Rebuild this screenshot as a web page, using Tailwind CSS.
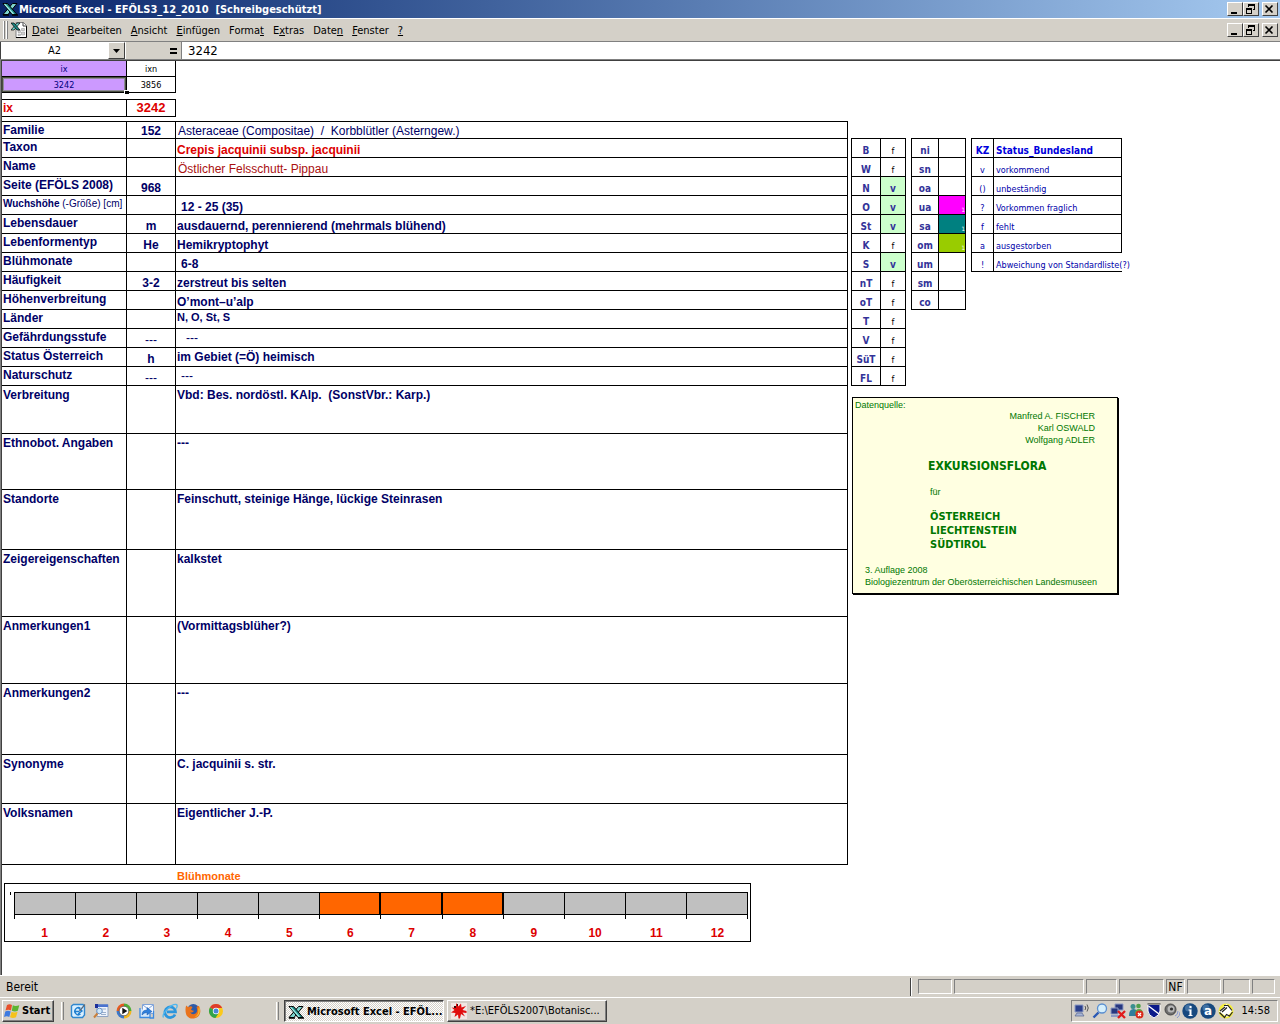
<!DOCTYPE html>
<html lang="de">

<head>
  <meta charset="UTF-8">
  <meta name="viewport" content="width=device-width, initial-scale=1">
  <title>Microsoft Excel - EFÖLS3_12_2010 [Schreibgeschützt]</title>
  <script src="https://cdn.jsdelivr.net/npm/@tailwindcss/browser@4"></script>
</head>

<body class="h-screen flex flex-col overflow-hidden bg-[#d4d0c8] text-black font-['DejaVu_Sans_Condensed','Liberation_Sans',sans-serif] text-[11px] leading-[14px]">

  <!-- Icons shared by several bars -->
  <svg class="hidden">
    <symbol id="excel" viewBox="0 0 16 16">
      <path d="M10.500 2.500h4.500L6 13.500H1z" fill="#7fd6d0" stroke="#000" stroke-width="1" />
      <path d="M1 2.500h4.500l9.500 11H10z" fill="#1d8a86" stroke="#000" stroke-width="1" />
      <path d="M2.500 3l9 10" stroke="#a5ece6" stroke-width="1.200" />
      <path d="M1 14h6M10 14h6" stroke="#000" stroke-width="1.500" />
    </symbol>
    <symbol id="win-min" viewBox="0 0 12 10"><path d="M3 8h6v2H3z" /></symbol>
    <symbol id="win-restore" viewBox="0 0 12 10">
      <path d="M4 0h7v6H9V5h1V2H5v1H4zM2 4h6v6H2zm1 2v3h4V6z" fill-rule="evenodd" />
    </symbol>
    <symbol id="win-close" viewBox="0 0 12 10">
      <path d="M2.500 1.500l7 7M9.500 1.500l-7 7" stroke="#000" stroke-width="1.600" />
    </symbol>
  </svg>

  <!-- Title bar -->
  <header class="flex items-center h-[18px] pl-[2px] pr-[2px] bg-gradient-to-r from-[#0a246a] to-[#a6caf0]">
    <svg class="w-4 h-4"><use href="#excel" /></svg>
    <h1 class="ml-px pt-px text-white font-bold whitespace-pre">Microsoft Excel - EFÖLS3_12_2010  [Schreibgeschützt]</h1>
    <div class="ml-auto flex [&_button]:w-4 [&_button]:h-[14px] [&_button]:bg-[#d4d0c8] [&_button]:border [&_button]:border-t-white [&_button]:border-l-white [&_button]:border-r-[#404040] [&_button]:border-b-[#404040]">
      <button aria-label="Minimieren"><svg class="w-3 h-[10px]"><use href="#win-min" /></svg></button>
      <button aria-label="Wiederherstellen"><svg class="w-3 h-[10px]"><use href="#win-restore" /></svg></button>
      <button aria-label="Schließen" class="ml-[3px]"><svg class="w-3 h-[10px]"><use href="#win-close" /></svg></button>
    </div>
  </header>

  <!-- Menu bar -->
  <nav class="flex items-center h-6 border-t border-b border-t-white border-b-[#808080] pl-[3px] pr-[2px]">
    <span class="w-[2px] h-[18px] border-l border-l-white border-r border-r-[#808080]"></span>
    <span class="ml-px w-[2px] h-[18px] border-l border-l-white border-r border-r-[#808080]"></span>
    <svg class="ml-[3px] w-4 h-4" viewBox="0 0 16 16">
      <path d="M5 .5h7.500l3 3v12H5z" fill="#fff" stroke="#808080" />
      <path d="M15.500 4v11.500H5" fill="none" stroke="#000" />
      <path d="M12 .5v3.500h3.500" fill="none" stroke="#404040" />
      <path d="M7 8.500h2.500v2H7zM10.500 6.500h3v2h-3zM7 12h2.500v1.500H7zM10.500 10h3v3h-3z" fill="#d0d0d0" stroke="#909090" stroke-width=".5" />
      <path d="M9 1H6L0 8h3z" fill="#6fd8d0" stroke="#000" stroke-width=".7" />
      <path d="M0 1h3l6 7H6z" fill="#1d8a86" stroke="#000" stroke-width=".7" />
    </svg>
    <div class="ml-[5px] pt-[2px] flex gap-[9px]">
      <button><u>D</u>atei</button>
      <button><u>B</u>earbeiten</button>
      <button><u>A</u>nsicht</button>
      <button><u>E</u>infügen</button>
      <button>Forma<u>t</u></button>
      <button>E<u>x</u>tras</button>
      <button>Date<u>n</u></button>
      <button><u>F</u>enster</button>
      <button><u>?</u></button>
    </div>
    <div class="ml-auto flex [&_button]:w-4 [&_button]:h-[14px] [&_button]:bg-[#d4d0c8] [&_button]:border [&_button]:border-t-white [&_button]:border-l-white [&_button]:border-r-[#404040] [&_button]:border-b-[#404040]">
      <button aria-label="Mappe minimieren"><svg class="w-3 h-[10px]"><use href="#win-min" /></svg></button>
      <button aria-label="Mappe wiederherstellen"><svg class="w-3 h-[10px]"><use href="#win-restore" /></svg></button>
      <button aria-label="Mappe schließen" class="ml-[3px]"><svg class="w-3 h-[10px]"><use href="#win-close" /></svg></button>
    </div>
  </nav>

  <!-- Formula bar -->
  <div class="flex h-[17px] bg-white">
    <input aria-label="Namenfeld" value="A2" class="w-[108px] border-l border-[#404040] pt-px text-center">
    <button aria-label="Namen auswählen" class="flex items-center justify-center w-[17px] bg-[#d4d0c8] border border-t-white border-l-white border-r-[#404040] border-b-[#404040]">
      <svg class="w-[7px] h-1" viewBox="0 0 7 4"><path d="M0 0h7L3.500 4z" /></svg>
    </button>
    <div class="ml-px w-14 pr-1 flex justify-end items-center bg-[#d4d0c8] border-r border-[#808080]">
      <button aria-label="Formel bearbeiten"><svg class="w-[7px] h-[6px]" viewBox="0 0 7 6"><path d="M0 0h7v2H0zM0 4h7v2H0z" /></svg></button>
    </div>
    <input aria-label="Bearbeitungsleiste" value="3242" class="flex-1 pl-[6px] text-[13px]">
  </div>

  <!-- Sheet -->
  <main class="flex flex-1 min-h-0 bg-white border-t border-l border-[#808080] font-['Liberation_Sans',sans-serif]">
    <div class="flex flex-1 border-t border-l border-[#404040] text-[12px] leading-[14px] text-[#000066]">

      <div class="w-[846px] shrink-0">
        <table class="border-separate border-spacing-0 table-fixed w-[174px] text-center text-[9px] leading-[12px] text-black font-['DejaVu_Sans_Condensed','Liberation_Sans',sans-serif] [&_td]:h-4 [&_td]:border-r [&_td]:border-b [&_td]:border-black">
          <colgroup><col class="w-[125px]"><col class="w-[49px]"></colgroup>
          <tr>
            <td class="bg-[#cc99ff] text-[#000080]">ix</td>
            <td>ixn</td>
          </tr>
          <tr>
            <td class="relative bg-[#cc99ff] text-[#000080] shadow-[inset_0_0_0_1px_#4a5040,inset_0_0_0_2px_#8f8a99]">3242
              <span class="absolute -right-[3px] -bottom-[2px] w-[5px] h-1 bg-black border-t border-l border-white"></span>
            </td>
            <td>3856</td>
          </tr>
        </table>

        <table class="mt-[6px] border-separate border-spacing-0 table-fixed w-[174px] border-t border-black text-[#dd0000] font-bold [&_td]:h-[17px] [&_td]:border-r [&_td]:border-b [&_td]:border-black">
          <colgroup><col class="w-[125px]"><col class="w-[49px]"></colgroup>
          <tr>
            <td class="pl-px">ix</td>
            <td class="text-center text-[13px]">3242</td>
          </tr>
        </table>

        <!-- Data sheet of the selected taxon -->
        <table class="mt-1 border-separate border-spacing-0 table-fixed w-full border-t border-black font-bold [&_th]:border-r [&_th]:border-b [&_td]:border-r [&_td]:border-b [&_th]:border-black [&_td]:border-black [&_th]:pl-px [&_th]:text-left [&_th]:align-top [&_th]:whitespace-nowrap">
          <colgroup><col class="w-[125px]"><col class="w-[49px]"><col></colgroup>
          <tbody class="align-bottom [&_th]:pt-px">
            <tr class="h-[17px]"><th>Familie</th><td class="text-center">152</td><td class="pl-[2px] font-normal whitespace-pre">Asteraceae (Compositae)  /  Korbblütler (Asterngew.)</td></tr>
            <tr class="h-[19px]"><th>Taxon</th><td></td><td class="pl-px text-[#dd0000]">Crepis jacquinii subsp. jacquinii</td></tr>
            <tr class="h-[19px]"><th>Name</th><td></td><td class="pl-[2px] font-normal text-[#aa1111]">Östlicher Felsschutt- Pippau</td></tr>
            <tr class="h-[19px]"><th>Seite (EFÖLS 2008)</th><td class="text-center">968</td><td></td></tr>
            <tr class="h-[19px]"><th class="text-[10px]">Wuchshöhe <span class="font-normal">(-Größe) [cm]</span></th><td></td><td class="pl-[5px]">12 - 25 (35)</td></tr>
            <tr class="h-[19px]"><th>Lebensdauer</th><td class="text-center">m</td><td class="pl-px">ausdauernd, perennierend (mehrmals blühend)</td></tr>
            <tr class="h-[19px]"><th>Lebenformentyp</th><td class="text-center">He</td><td class="pl-px">Hemikryptophyt</td></tr>
            <tr class="h-[19px]"><th>Blühmonate</th><td></td><td class="pl-[5px]">6-8</td></tr>
            <tr class="h-[19px]"><th>Häufigkeit</th><td class="text-center">3-2</td><td class="pl-px">zerstreut bis selten</td></tr>
            <tr class="h-[19px]"><th>Höhenverbreitung</th><td></td><td class="pl-px">O’mont–u’alp</td></tr>
            <tr class="h-[19px]"><th>Länder</th><td></td><td class="pl-px align-top text-[11px]">N, O, St, S</td></tr>
            <tr class="h-[19px]"><th>Gefährdungsstufe</th><td class="text-center font-normal">---</td><td class="pl-[10px] align-middle font-normal">---</td></tr>
            <tr class="h-[19px]"><th>Status Österreich</th><td class="text-center">h</td><td class="pl-px align-middle">im Gebiet (=Ö) heimisch</td></tr>
            <tr class="h-[19px]"><th>Naturschutz</th><td class="text-center font-normal">---</td><td class="pl-[5px] align-middle font-normal">---</td></tr>
          </tbody>
          <tbody class="align-top [&_th]:pt-[2px] [&_td]:pt-[2px]">
            <tr class="h-12"><th>Verbreitung</th><td></td><td class="pl-px whitespace-pre">Vbd: Bes. nordöstl. KAlp.  (SonstVbr.: Karp.)</td></tr>
            <tr class="h-14"><th>Ethnobot. Angaben</th><td></td><td class="pl-px">---</td></tr>
            <tr class="h-[60px]"><th>Standorte</th><td></td><td class="pl-px">Feinschutt, steinige Hänge, lückige Steinrasen</td></tr>
            <tr class="h-[67px]"><th>Zeigereigenschaften</th><td></td><td class="pl-px">kalkstet</td></tr>
            <tr class="h-[67px]"><th>Anmerkungen1</th><td></td><td class="pl-px">(Vormittagsblüher?)</td></tr>
            <tr class="h-[71px]"><th>Anmerkungen2</th><td></td><td class="pl-px">---</td></tr>
            <tr class="h-[49px]"><th>Synonyme</th><td></td><td class="pl-px">C. jacquinii s. str.</td></tr>
            <tr class="h-[61px]"><th>Volksnamen</th><td></td><td class="pl-px">Eigentlicher J.-P.</td></tr>
          </tbody>
        </table>

        <!-- Flowering months -->
        <h2 class="mt-1 pl-[175px] text-[11px] leading-[14px] font-bold text-[#ff6600]">Blühmonate</h2>
        <div class="ml-[2px] flex w-[747px] h-[59px] border border-black pt-2 text-[#dd0000] font-bold">
          <span class="ml-[5px] w-px h-[3px] bg-black"></span>
          <div class="ml-[3px] w-[734px]">
            <div class="grid grid-cols-12 h-[23px] border-y border-r border-black bg-[#c0c0c0] [&_i]:border-l [&_i]:border-black">
              <i></i><i></i><i></i><i></i><i></i>
              <i class="bg-[#ff6600]"></i><i class="bg-[#ff6600] shadow-[-1px_0_0_#000]"></i><i class="bg-[#ff6600] shadow-[-1px_0_0_#000]"></i>
              <i class="shadow-[-1px_0_0_#000]"></i><i></i><i></i><i></i>
            </div>
            <div class="grid grid-cols-12 h-1 border-r border-black [&_i]:border-l [&_i]:border-black">
              <i></i><i></i><i></i><i></i><i></i><i></i><i></i><i></i><i></i><i></i><i></i><i></i>
            </div>
            <div class="grid grid-cols-12 mt-[7px] text-center">
              <span>1</span><span>2</span><span>3</span><span>4</span><span>5</span><span>6</span><span>7</span><span>8</span><span>9</span><span>10</span><span>11</span><span>12</span>
            </div>
          </div>
        </div>
      </div>

      <!-- Provinces, altitude levels, legend -->
      <div class="ml-[3px] pt-[77px]">
        <div class="flex items-start gap-[5px] text-[10px] leading-[12px] text-[#333399] font-['DejaVu_Sans_Condensed','Liberation_Sans',sans-serif]">
          <table class="border-separate border-spacing-0 table-fixed w-[55px] border-t border-l border-black text-center [&_td]:h-[19px] [&_th]:border-r [&_th]:border-b [&_td]:border-r [&_td]:border-b [&_th]:border-black [&_td]:border-black [&_td]:align-bottom [&_th]:align-bottom">
            <colgroup><col class="w-[29px]"><col class="w-[25px]"></colgroup>
            <tr><th>B</th><td class="text-[9px] text-black">f</td></tr>
            <tr><th>W</th><td class="text-[9px] text-black">f</td></tr>
            <tr><th>N</th><td class="bg-[#ccffcc] font-bold">v</td></tr>
            <tr><th>O</th><td class="bg-[#ccffcc] font-bold">v</td></tr>
            <tr><th>St</th><td class="bg-[#ccffcc] font-bold">v</td></tr>
            <tr><th>K</th><td class="text-[9px] text-black">f</td></tr>
            <tr><th>S</th><td class="bg-[#ccffcc] font-bold">v</td></tr>
            <tr><th>nT</th><td class="text-[9px] text-black">f</td></tr>
            <tr><th>oT</th><td class="text-[9px] text-black">f</td></tr>
            <tr><th>T</th><td class="text-[9px] text-black">f</td></tr>
            <tr><th>V</th><td class="text-[9px] text-black">f</td></tr>
            <tr><th>SüT</th><td class="text-[9px] text-black">f</td></tr>
            <tr><th>FL</th><td class="text-[9px] text-black">f</td></tr>
          </table>

          <table class="border-separate border-spacing-0 table-fixed w-[55px] border-t border-l border-black text-center [&_td]:h-[19px] [&_th]:border-r [&_th]:border-b [&_td]:border-r [&_td]:border-b [&_th]:border-black [&_td]:border-black [&_td]:align-bottom [&_th]:align-bottom">
            <colgroup><col class="w-[27px]"><col class="w-[27px]"></colgroup>
            <tr><th>ni</th><td></td></tr>
            <tr><th>sn</th><td></td></tr>
            <tr><th>oa</th><td></td></tr>
            <tr><th>ua</th><td class="bg-[#ff00ff] text-right text-[6px] leading-[9px] text-white">1</td></tr>
            <tr><th>sa</th><td class="bg-[#008080] text-right text-[6px] leading-[9px] text-white">1</td></tr>
            <tr><th>om</th><td class="bg-[#99cc00] text-right text-[6px] leading-[9px] text-white">1</td></tr>
            <tr><th>um</th><td></td></tr>
            <tr><th>sm</th><td></td></tr>
            <tr><th>co</th><td></td></tr>
          </table>

          <table class="border-separate border-spacing-0 table-fixed w-[151px] border-t border-l border-black text-[#0000aa] whitespace-nowrap [&_td]:h-[19px] [&_td]:text-[9px] [&_th]:h-[19px] [&_th]:border-r [&_th]:border-b [&_td]:border-b [&_th]:border-black [&_td]:border-black [&_td]:align-bottom [&_th]:align-bottom">
            <colgroup><col class="w-[22px]"><col class="w-[128px]"></colgroup>
            <tr class="text-[#0000dd]"><th>KZ</th><th class="pl-[2px] text-left">Status_Bundesland</th></tr>
            <tr><td class="text-center border-r">v</td><td class="pl-[2px] border-r">vorkommend</td></tr>
            <tr><td class="text-center border-r">()</td><td class="pl-[2px] border-r">unbeständig</td></tr>
            <tr><td class="text-center border-r">?</td><td class="pl-[2px] border-r">Vorkommen fraglich</td></tr>
            <tr><td class="text-center border-r">f</td><td class="pl-[2px] border-r">fehlt</td></tr>
            <tr><td class="text-center border-r">a</td><td class="pl-[2px] border-r">ausgestorben</td></tr>
            <tr><td class="text-center border-r">!</td><td class="pl-[2px]">Abweichung von Standardliste(?)</td></tr>
          </table>
        </div>

        <!-- Source note -->
        <section class="mt-[11px] ml-px w-[266px] h-[197px] border border-black bg-[#ffffe1] shadow-[1px_1px_0_#000] pl-[2px] text-[9px] leading-[12px] text-[#007700] whitespace-nowrap">
          <p class="mt-px">Datenquelle:</p>
          <p class="-mt-px pr-[22px] text-right">Manfred A. FISCHER<br>Karl OSWALD<br>Wolfgang ADLER</p>
          <h2 class="mt-3 pl-[73px] text-[12px] leading-4 font-bold font-['DejaVu_Sans_Condensed',sans-serif]">EXKURSIONSFLORA</h2>
          <p class="mt-3 pl-[75px]">für</p>
          <p class="mt-3 pl-[75px] text-[11px] leading-[14px] font-bold font-['DejaVu_Sans_Condensed',sans-serif]">ÖSTERREICH<br>LIECHTENSTEIN<br>SÜDTIROL</p>
          <p class="mt-3 pl-[10px]">3. Auflage 2008<br>Biologiezentrum der Oberösterreichischen Landesmuseen</p>
        </section>
      </div>
    </div>
  </main>

  <!-- Status bar -->
  <div class="flex items-center h-[22px] border-t border-white pl-[6px] pr-[5px] [&_i]:h-[15px] [&_i]:border [&_i]:border-t-[#808080] [&_i]:border-l-[#808080] [&_i]:border-r-white [&_i]:border-b-white [&_i]:not-italic">
    <span class="pt-px text-[12px]">Bereit</span>
    <span class="ml-auto mr-[6px] w-[2px] h-[18px] border-l border-l-[#404040] border-r border-r-white"></span>
    <div class="flex gap-[2px]">
      <i class="w-[34px]"></i>
      <i class="w-[130px]"></i>
      <i class="w-[31px]"></i>
      <i class="w-[45px]"></i>
      <i class="w-[19px] text-center text-[12px] leading-[14px]">NF</i>
      <i class="w-[34px]"></i>
      <i class="w-[27px]"></i>
      <i class="w-[23px]"></i>
    </div>
  </div>

  <!-- Taskbar -->
  <footer class="flex items-center h-[27px] border-t border-white pl-[2px] pr-[2px]">
    <button class="flex items-center gap-[2px] w-[52px] h-[22px] pl-px border border-t-white border-l-white border-r-[#404040] border-b-[#404040] shadow-[inset_-1px_-1px_0_#808080] font-bold">
      <svg class="w-4 h-4" viewBox="0 0 16 16">
        <path d="M3 2q2.500-1.500 5 0L7 7.500q-2.500-1.500-5.500 0z" fill="#e8502a" />
        <path d="M8.800 2.300q2.500 1.500 6.500 0l-1.500 5.500q-3 1.500-6 0z" fill="#5cb531" />
        <path d="M1.300 8.500q2.500-1.500 5.400 0l-1.400 5.500q-2.500-1.500-5.300 0z" fill="#3d7be0" />
        <path d="M7.600 8.800q2.500 1.500 6 0L12 14.300q-3 1.500-6 0z" fill="#f5c21c" />
      </svg>
      Start
    </button>
    <span class="ml-[7px] w-[3px] h-[18px] border-l border-l-white border-r border-r-[#808080]"></span>

    <div class="ml-[6px] flex gap-[7px] [&_svg]:w-4 [&_svg]:h-4">
      <button aria-label="Desktop anzeigen">
        <svg viewBox="0 0 16 16">
          <path d="M1.500 3l2-1.500H13l1.500 2V12l-2 2.500H3L1.500 13z" fill="#d9efff" stroke="#2f87cf" stroke-width="1.400" />
          <path d="M10.500 5.500A3.500 3.500 0 1 0 10.500 11M5.500 8.500h4M8 4.500L12 8 8 11" fill="none" stroke="#1f7fd0" stroke-width="1.400" />
          <path d="M15 1.500L9.500 8" stroke="#5a6a7a" stroke-width="1.200" />
        </svg>
      </button>
      <button aria-label="Suche">
        <svg viewBox="0 0 16 16">
          <path d="M4 1.500h11v12H4z" fill="#eef3fb" stroke="#8fa3c2" />
          <path d="M4 1.500h11v2.500H4z" fill="#4a72cf" />
          <path d="M2 1h3v4H2z" fill="#1d2f9a" />
          <path d="M6 6h7M8 9.500h5M8 11.500h5" stroke="#9bb0cc" />
          <circle cx="6.500" cy="8" r="2.800" fill="#cfe8fb" stroke="#6e93c4" />
          <path d="M4.500 10.500L1 14.500" stroke="#c97f3a" stroke-width="2" />
        </svg>
      </button>
      <button aria-label="Media Player">
        <svg viewBox="0 0 16 16">
          <path d="M8 8V.5A7.500 7.500 0 0 0 .5 8z" fill="#e65a20" />
          <path d="M8 8h7.500A7.500 7.500 0 0 0 8 .5z" fill="#4fae35" />
          <path d="M8 8H.5A7.500 7.500 0 0 0 8 15.500z" fill="#3d78c9" />
          <path d="M8 8v7.500A7.500 7.500 0 0 0 15.500 8z" fill="#f2b61e" />
          <circle cx="8" cy="8" r="4.800" fill="#fff" stroke="#444" stroke-width=".7" />
          <path d="M6.300 4.800v6.400L11.400 8z" fill="#111" />
        </svg>
      </button>
      <button aria-label="Outlook Express">
        <svg viewBox="0 0 16 16">
          <path d="M3.500 1.500h11v9h-11z" fill="#f5f9ff" stroke="#7fa3d9" />
          <path d="M4 2l5 4 5-4" fill="none" stroke="#7fa3d9" />
          <path d="M1 5v9.500h10V11" fill="#d5e8fb" stroke="#3c8ae0" stroke-width="1.300" />
          <path d="M3 12q0-5 5-5V4.500L13 8.500 8 12V9.500Q5 9.500 3 12z" fill="#2f80dd" stroke="#1b56a8" stroke-width=".5" />
          <path d="M14.500 8v7h-4" fill="none" stroke="#3c8ae0" stroke-width="1.300" />
        </svg>
      </button>
      <button aria-label="Internet Explorer">
        <svg viewBox="0 0 16 16">
          <path d="M13 11.500A5.300 5.300 0 1 1 13.500 8.800H5" fill="none" stroke="#2c96dd" stroke-width="2.700" />
          <path d="M1.500 14.500C-.8 11 9 1 14 1.500c2 .3 1 3 .2 4" fill="none" stroke="#4fb6ee" stroke-width="1.300" />
        </svg>
      </button>
      <button aria-label="Firefox">
        <svg viewBox="0 0 16 16">
          <circle cx="8.300" cy="7" r="6" fill="#2c5aa8" />
          <path d="M1.200 2.500l2 1.800C5 2.700 6.500 3 7.500 4.200L6 6.500q1 1.500 3 1-1 3-4 1.500 2 3.500 5.500 1.500c2-1.500 2-4 1-6.500 1-1 1.500-1 2.500-1 2 3.500 1.800 8-.8 10.500C9 17 3 16 1.200 11.500.3 9 .2 5 1.200 2.500z" fill="#e9731c" />
          <path d="M14.300 4c1.600 5-.5 10-5.300 10.500 4-2 4.800-5 4.300-8.500z" fill="#f8c02c" />
        </svg>
      </button>
      <button aria-label="Chrome">
        <svg viewBox="0 0 16 16">
          <circle cx="8" cy="8" r="7" fill="#fbc91b" />
          <path d="M8 8L1.900 4.500A7 7 0 0 1 14.200 5H8z" fill="#de3b2d" />
          <path d="M1.900 4.500A7 7 0 0 0 7.500 15L11 9.500 8 8z" fill="#31a34c" />
          <circle cx="8" cy="8" r="3.200" fill="#fff" />
          <circle cx="8" cy="8" r="2.500" fill="#4a86d8" />
        </svg>
      </button>
    </div>

    <span class="ml-[52px] w-[3px] h-[18px] border-l border-l-white border-r border-r-[#808080]"></span>
    <button class="ml-[5px] flex items-center gap-[3px] w-40 h-[22px] pl-[3px] pt-px whitespace-nowrap font-bold border border-t-[#404040] border-l-[#404040] border-r-white border-b-white shadow-[inset_1px_1px_0_#808080] bg-[conic-gradient(#fff_25%,#d4d0c8_0_50%,#fff_0_75%,#d4d0c8_0)] bg-[size:2px_2px]">
      <svg class="w-4 h-4 shrink-0"><use href="#excel" /></svg>
      Microsoft Excel - EFÖL...
    </button>
    <button class="ml-[3px] flex items-center gap-[3px] w-40 h-[22px] pl-[3px] whitespace-nowrap border border-t-white border-l-white border-r-[#404040] border-b-[#404040] shadow-[inset_-1px_-1px_0_#808080]">
      <svg class="w-4 h-4 shrink-0" viewBox="0 0 16 16">
        <path d="M0 0h16v16H0z" fill="#f1e7e3" />
        <path d="M5 0l2.500 3.500L10 .5l.5 4L15 3l-3.500 4 4 1v2l-4-.5 2.500 4-4-2.500L9 15.500H7.500L7 11.500 3.500 14l1-4L0 9.500 3.500 7 .5 4.500 5 5z" fill="#e00d0d" />
        <path d="M3 3h2v2H3zM6 1h1v2H6z" fill="#3a0a0a" />
      </svg>
      *E:\EFÖLS2007\Botanisc...
    </button>

    <!-- Tray -->
    <div class="ml-auto flex items-center gap-[2px] h-[22px] pl-[2px] pr-[7px] border border-t-[#808080] border-l-[#808080] border-r-white border-b-white [&_svg]:w-4 [&_svg]:h-4">
      <svg viewBox="0 0 16 16">
        <path d="M1 2h8v7H1z" fill="#2a3f8c" stroke="#8d9bc4" />
        <path d="M3 10h5l2 3H1z" fill="#a9b6d6" stroke="#55648f" stroke-width=".7" />
        <path d="M11 3q1.500 2 0 4M13 1.500q2.500 3.500 0 7" fill="none" stroke="#555" />
      </svg>
      <svg viewBox="0 0 16 16">
        <path d="M6.500 9.500L1.500 14.500" stroke="#2a59b5" stroke-width="2.400" />
        <circle cx="10" cy="5.500" r="4.500" fill="#d5effc" stroke="#5b8fd0" stroke-width="1.300" />
      </svg>
      <svg viewBox="0 0 16 16">
        <path d="M5 1h8v6H5z" fill="#27377f" stroke="#8d9bc4" />
        <path d="M1 5h7v6H1z" fill="#27377f" stroke="#8d9bc4" />
        <path d="M1 13h8" stroke="#8d9bc4" stroke-width="2" />
        <path d="M8 8l7 7M15 8l-7 7" stroke="#e01b1b" stroke-width="2.300" />
      </svg>
      <svg viewBox="0 0 16 16">
        <circle cx="5" cy="3.500" r="2.500" fill="#3a8f8f" /><circle cx="10.500" cy="3" r="2.300" fill="#4fa04a" />
        <path d="M1 13q0-7 4.500-7T10 13z" fill="#2f7d9c" /><path d="M7 11q0-5 4-5t4 5z" fill="#5bab49" />
        <circle cx="11.500" cy="11.500" r="4" fill="#d92b1c" />
        <path d="M10 10l3 3M13 10l-3 3" stroke="#fff" stroke-width="1.200" />
      </svg>
      <svg viewBox="0 0 16 16">
        <path d="M2 1.500h12V8q0 4-6 7Q2 12 2 8z" fill="#0b1a8a" stroke="#fff" />
        <path d="M2.500 3L13 11" stroke="#fff" stroke-width="1.300" />
        <path d="M1.500 1h13" stroke="#222" />
      </svg>
      <svg viewBox="0 0 16 16">
        <circle cx="6.500" cy="6.500" r="5.500" fill="#6e6e6e" stroke="#444" />
        <circle cx="7" cy="6" r="3.500" fill="#b8b8b8" /><circle cx="7.500" cy="6" r="1.600" fill="#333" />
        <path d="M11 13q3-1 3-5M13 15q3-2 3-6" fill="none" stroke="#8898d0" />
      </svg>
      <svg viewBox="0 0 16 16">
        <circle cx="8" cy="8" r="7.700" fill="#17497f" /><circle cx="6.500" cy="5" r="3.500" fill="#5d8cbb" opacity=".6" />
        <path d="M7.500 3h2v2h-2zM6.500 6.500h3V12h1v1H6.500v-1h1V7.500h-1z" fill="#fff" />
      </svg>
      <svg viewBox="0 0 16 16">
        <circle cx="8" cy="8" r="7.700" fill="#17497f" /><circle cx="6" cy="5" r="3.500" fill="#5d8cbb" opacity=".6" />
        <text x="8" y="12" text-anchor="middle" font-family="DejaVu Sans" font-weight="bold" font-size="12" fill="#fff">a</text>
      </svg>
      <svg viewBox="0 0 16 16">
        <circle cx="8" cy="8" r="7.500" fill="#f5ee3c" />
        <path d="M1 8.500L8.500 1l6 6.500L9 14z" fill="#fff" />
        <path d="M6 2.500h4l4 5M2 8l5-4M4 9l5-4.500M1.500 9.500l5 5 2-3 3 1.500 3-4" fill="none" stroke="#222" stroke-width="1.200" />
      </svg>
      <time class="ml-[5px]">14:58</time>
    </div>
  </footer>

</body>

</html>
